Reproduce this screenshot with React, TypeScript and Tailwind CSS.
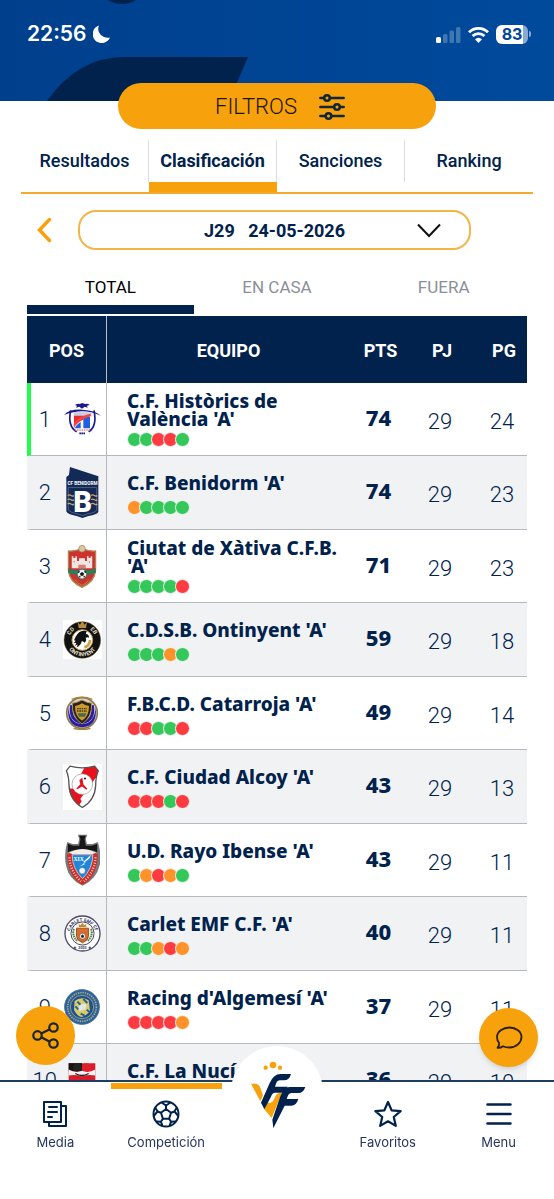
import { useState } from "react";
import type { ReactNode } from "react";
import clsx from "clsx";

type Result = "W" | "D" | "L";

type Team = {
  name: string;
  pts: number;
  played: number;
  won: number;
  form: string;
  crest: ReactNode;
};

const dotColors: Record<Result, string> = {
  W: "bg-[#34c759]",
  D: "bg-[#ff922b]",
  L: "bg-[#ff3b42]",
};

const HistoricsCrest = () => (
  <svg viewBox="0 0 111 96" className="w-[37px] h-8" aria-hidden="true">
    <path d="M33 6q8-6 14-3l8-3 8 3q8-3 14 3l-8 2 2 6-9-3-8 6-8-6-10 3 3-6z" fill="#1a1a8c" />
    <path d="M20 22Q10 70 38 86M90 22Q100 70 74 86" fill="none" stroke="#1a1a8c" strokeWidth="5" />
    <path d="M0 36Q16 18 55 20T111 38Q80 25 55 25T0 36z" fill="#1a1a8c" />
    <path d="M29 28h54v12q-30 0-54 18z" fill="#c9cde4" />
    <path d="M30 38h28v12q-14 4-28 22z" fill="#ee2b2b" />
    <path d="M58 44q12-6 20-2v34H58z" fill="#1f5fe0" />
    <path d="M30 76q10-24 50-36v-8Q44 38 29 62z" fill="#f04444" />
    <path d="M50 56v20H32q6-12 18-20z" fill="#1f5fe0" />
    <path d="M32 81h46" stroke="#e77" strokeWidth="5" strokeDasharray="4 3" />
    <path d="M46 91h18" stroke="#1a1a8c" strokeWidth="5" strokeDasharray="5 1" />
  </svg>
);

const BenidormCrest = () => (
  <svg viewBox="0 0 100 154" className="w-[33px] h-[51px]" aria-hidden="true">
    <path d="M12 0 98 28v108q-4 8-30 12l-18 6-18-6Q4 144 1 134V30l8-6z" fill="#132a56" />
    <path d="M7 62v68q6 8 28 12l15 5 15-5q24-4 28-12V62z" fill="none" stroke="#8b93a8" strokeWidth="1.5" />
    <text x="50" y="53" textAnchor="middle" fill="#fff" fontSize="14" fontWeight="700" fontFamily="Roboto">CF BENIDORM</text>
    <text x="50" y="136" textAnchor="middle" fill="#fff" fontSize="88" fontWeight="900" fontFamily="Roboto">B</text>
    <path d="M5 86q5-4 10 0t9 0M5 99q5-4 10 0t9 0M5 112q5-4 10 0t9 0M76 86q5-4 10 0t9 0M76 99q5-4 10 0t9 0M76 112q5-4 10 0t9 0" fill="none" stroke="#c9a56a" strokeWidth="4" />
  </svg>
);

const XativaCrest = () => (
  <svg viewBox="0 0 90 130" className="w-[30px] h-[43px]" aria-hidden="true">
    <path d="M4 18Q24 20 45 10 66 20 86 18v58q-2 34-41 52Q6 110 4 76z" fill="#cf3030" stroke="#a98a52" strokeWidth="4" />
    <circle cx="45" cy="11" r="10" fill="#d8c8a0" stroke="#9a8555" strokeWidth="2" />
    <path d="M14 34h5v5h6v-5h5v14h6V40h18v8h6V34h5v5h6v-5h5v36H14z" fill="#efe6e0" />
    <path d="M34 60h22v10H34zM20 48h3v6h-3zM66 48h3v6h-3z" fill="#d77" />
    <path d="M3 70q20 12 42 2 22 10 42-2v14q-22 10-42 4-22 6-42-4z" fill="#2f7d58" />
    <circle cx="45" cy="88" r="16" fill="#2f7d58" />
    <circle cx="45" cy="88" r="13" fill="#eee" />
    <path d="m45 82 6 4-2 7h-8l-2-7z" fill="#111" />
    <path d="m34 84 3-5M56 84l-3-5M37 97l3-2M53 97l-3-2" stroke="#111" strokeWidth="4" />
    <path d="M24 104q8 14 21 18 13-4 21-18" fill="none" stroke="#b3872f" strokeWidth="3" />
  </svg>
);

const OntinyentCrest = () => (
  <svg viewBox="0 0 117 117" className="w-[39px] h-[39px] bg-white" aria-hidden="true">
    <circle cx="58" cy="60" r="55" fill="#111" stroke="#7a6a45" strokeWidth="1.5" />
    <circle cx="58" cy="60" r="31" fill="#fff" stroke="#c9a24b" strokeWidth="3" />
    <path d="M44 6 51 14l7-12 7 12 7-8-3 18H47z" fill="#b98b3d" />
    <path d="M38 50q12-24 34-16-4 3-3 8 9 1 9 11-6-3-10 1 4 8-3 14-4-6-9-4-2 12-15 18l3-9-8 5 4-10-8 2 6-8-5-1z" fill="#111" />
    <path d="M64 82q16-4 17-22" fill="none" stroke="#c9a24b" strokeWidth="8" />
    <defs>
      <path id="ontTop" d="M19 60a39 39 0 0 1 78 0" />
      <path id="ontBottom" d="M9 60a49 49 0 0 0 98 0" />
    </defs>
    <g fill="#e8e2d0" fontFamily="Roboto" fontWeight="700" fontSize="17">
      <text><textPath href="#ontTop" startOffset="12%">CD</textPath></text>
      <text><textPath href="#ontTop" startOffset="70%">EB</textPath></text>
      <text><textPath href="#ontBottom" startOffset="50%" textAnchor="middle">ONTINYENT</textPath></text>
    </g>
  </svg>
);

const CatarrojaCrest = () => (
  <svg viewBox="0 0 102 102" className="w-[34px] h-[34px]" aria-hidden="true">
    <circle cx="51" cy="51" r="46" fill="#d8d2d8" stroke="#8c7a55" strokeWidth="5" />
    <path d="M10 34Q4 92 51 94 98 92 92 34 88 84 51 84 14 84 10 34z" fill="#2a1e9a" />
    <path d="M20 28Q12 74 51 80 90 74 82 28" fill="none" stroke="#2a1e9a" strokeWidth="9" />
    <path d="M22 22q15-2 29-10 14 8 29 10 2 42-29 62Q20 64 22 22z" fill="#2a2119" stroke="#b3913d" strokeWidth="3" />
    <path d="M30 30q12-2 21-8 9 6 21 8 0 32-21 44-21-12-21-44z" fill="#c99c2e" />
    <path d="M36 38h30M36 45h30" stroke="#4a3717" strokeWidth="4" strokeDasharray="5 2" />
    <path d="M38 52h26l-4 10H42z" fill="#446a55" />
    <path d="M20 10q31-13 62 0M26 97q25 7 50 0" fill="none" stroke="#a9852f" strokeWidth="4" />
  </svg>
);

const AlcoyCrest = () => (
  <svg viewBox="0 0 117 137" className="w-[39px] h-[46px] bg-white" aria-hidden="true">
    <defs>
      <clipPath id="alcoy">
        <path d="M10 20 21 6q37 10 74 0l11 14q-8 18-8 44-2 44-40 66-38-22-40-66 0-26-8-44z" />
      </clipPath>
    </defs>
    <g clipPath="url(#alcoy)">
      <path fill="#fff" d="M0 0h117v137H0z" />
      <path d="M70 0h50v24L96 44 40 120 14 104V74h16z" fill="#e8121d" />
      <path d="M14 74h20l24 40-10 16z" fill="#e8121d" />
      <path d="m50 120 24-34 30-46v97H50z" fill="#fff" />
    </g>
    <circle cx="58" cy="60" r="31" fill="#fff" stroke="#777" strokeWidth="1.5" />
    <path d="m58 40 3 20 12 14-3 3-13-10-14 8-3-2 12-13-3-12z" fill="#e8121d" />
    <circle cx="66" cy="43" r="3" fill="#111" />
    <path d="M10 20 21 6q37 10 74 0l11 14q-8 18-8 44-2 44-40 66-38-22-40-66 0-26-8-44z" fill="none" stroke="#555" strokeWidth="4" />
  </svg>
);

const RayoCrest = () => (
  <svg viewBox="0 0 104 156" className="w-[35px] h-[52px]" aria-hidden="true">
    <path d="M38 2h28l-4 12 3 16h17l16-6q12 38 6 68-10 44-52 63Q10 136 2 92-4 62 6 24l16 6h17l3-16z" fill="#77797c" />
    <path d="M42 5h20l-4 10 4 20h18l16-6v26q-14-8-22-6-22-8-44 0-8-2-22 6V29l16 6h18l4-20z" fill="#171717" />
    <path d="M6 62q46-30 92 0-2 66-46 90Q8 128 6 62z" fill="#d12c25" />
    <path d="M21 62h62q0 42-31 72Q21 104 21 62z" fill="#1f86d8" stroke="#eee" strokeWidth="2" />
    <path d="M10 56q42-22 84 0l-12 4H22z" fill="#f2efe9" />
    <path d="m78 62-24 22h8L42 98l18-8-6-2 18-14z" fill="#fff" />
    <circle cx="51" cy="110" r="9" fill="#f4f4f4" stroke="#777" />
    <text x="25" y="80" fill="#fff" fontSize="17" fontWeight="700" fontFamily="Liberation Serif">XIX</text>
    <path d="M13 70q2 42 34 72M91 70q-2 42-34 72" fill="none" stroke="#f3d9d5" strokeWidth="7" strokeDasharray="3 5" />
  </svg>
);

const CarletCrest = () => (
  <svg viewBox="0 0 112 112" className="w-[37px] h-[37px]" aria-hidden="true">
    <circle cx="56" cy="56" r="53" fill="#fff" stroke="#4a4a6a" strokeWidth="4" />
    <circle cx="56" cy="56" r="35" fill="#f6f4ef" stroke="#4a4a6a" strokeWidth="3" />
    <path d="M45 36v-9l5 4 6-7 6 7 5-4v9z" fill="#c68a2c" />
    <path d="M38 40h36v24q0 12-18 20-18-8-18-20z" fill="#e0692c" stroke="#8a5a22" strokeWidth="3" />
    <circle cx="56" cy="64" r="9" fill="#fff" stroke="#333" strokeWidth="1.5" />
    <path d="m56 59 5 4-2 6h-6l-2-6z" fill="#222" />
    <path d="M30 42q-7 20 10 36M82 42q7 20-10 36" fill="none" stroke="#4f8a4a" strokeWidth="6" strokeDasharray="5 2" />
    <defs>
      <path id="carTop" d="M16 60a40 40 0 0 1 80 0" />
    </defs>
    <text fill="#34345c" fontFamily="Roboto" fontWeight="700" fontSize="14">
      <textPath href="#carTop" startOffset="50%" textAnchor="middle">CARLET EMF CF</textPath>
    </text>
    <text x="56" y="103" textAnchor="middle" fill="#34345c" fontFamily="Roboto" fontWeight="700" fontSize="11">★ 2003 ★</text>
  </svg>
);

const RacingCrest = () => (
  <svg viewBox="0 0 108 108" className="w-9 h-9" aria-hidden="true">
    <circle cx="54" cy="54" r="52" fill="#2f5f9a" stroke="#3d7096" strokeWidth="3" />
    <circle cx="54" cy="54" r="43" fill="none" stroke="#9fb489" strokeWidth="5" strokeDasharray="4 3" />
    <circle cx="54" cy="54" r="35" fill="#1f4f96" stroke="#c9c36a" strokeWidth="2" />
    <path d="M32 36q20-16 42-2l4 30q-8 16-26 20-16-6-22-22z" fill="#d6cc62" />
    <path d="m40 38 10 10M34 52l10 10M58 30l12 12M50 74l12 6M68 62l10 8" stroke="#2f5f9a" strokeWidth="6" />
    <path d="M44 52q12-14 24-4l-4 14-20 4z" fill="#dfe6e6" />
  </svg>
);

const NuciaCrest = () => (
  <svg viewBox="0 0 84 110" className="w-7 h-[37px]" aria-hidden="true">
    <path d="M2 3h80v62Q78 92 42 108 6 92 2 65z" fill="#d91c2b" />
    <path d="M2 3h40v24H2z" fill="#141414" />
    <circle cx="28" cy="16" r="13" fill="#222" />
    <circle cx="56" cy="16" r="13" fill="#e11d2b" />
    <path d="M2 22q20 12 40 4 20 8 40-4v18q-20-4-40 2-20-6-40-2z" fill="#f6f1f1" />
    <path d="M22 34q20 12 40 0" fill="none" stroke="#222" strokeWidth="4" />
  </svg>
);

const teams: Team[] = [
  { name: "C.F. Històrics de València 'A'", pts: 74, played: 29, won: 24, form: "WWLLW", crest: <HistoricsCrest /> },
  { name: "C.F. Benidorm 'A'", pts: 74, played: 29, won: 23, form: "DWWWW", crest: <BenidormCrest /> },
  { name: "Ciutat de Xàtiva C.F.B. 'A'", pts: 71, played: 29, won: 23, form: "WWWWL", crest: <XativaCrest /> },
  { name: "C.D.S.B. Ontinyent 'A'", pts: 59, played: 29, won: 18, form: "WWWDW", crest: <OntinyentCrest /> },
  { name: "F.B.C.D. Catarroja 'A'", pts: 49, played: 29, won: 14, form: "LLWWL", crest: <CatarrojaCrest /> },
  { name: "C.F. Ciudad Alcoy 'A'", pts: 43, played: 29, won: 13, form: "LLLWL", crest: <AlcoyCrest /> },
  { name: "U.D. Rayo Ibense 'A'", pts: 43, played: 29, won: 11, form: "WDLDW", crest: <RayoCrest /> },
  { name: "Carlet EMF C.F. 'A'", pts: 40, played: 29, won: 11, form: "WWDLD", crest: <CarletCrest /> },
  { name: "Racing d'Algemesí 'A'", pts: 37, played: 29, won: 11, form: "LLLLD", crest: <RacingCrest /> },
  { name: "C.F. La Nucía 'A'", pts: 36, played: 29, won: 10, form: "WLWDL", crest: <NuciaCrest /> },
];

const sections = ["Resultados", "Clasificación", "Sanciones", "Ranking"];
const venues = ["TOTAL", "EN CASA", "FUERA"];

const StatusBar = () => (
  <div className="relative flex items-center justify-between pl-[27px] pr-[23px] pt-5 text-white font-['Inter',sans-serif]">
    <div className="flex items-center gap-1.5">
      <span className="text-[21px] leading-7 font-semibold">22:56</span>
      <svg viewBox="0 0 17 18" className="w-[17px] h-[18px]" aria-hidden="true">
        <path d="M6 .5A9 9 0 1 0 17 12.500 9.500 9.500 0 0 1 11 12 8.500 8.500 0 0 1 6 .5z" fill="#fff" />
      </svg>
    </div>
    <div className="flex items-center gap-[7px]">
      <svg viewBox="0 0 25 17" className="w-[25px] h-[17px]" aria-hidden="true">
        <rect x="0" y="11" width="5" height="6" rx="1.500" fill="#fff" />
        <g fill="#fff" opacity=".25">
          <rect x="7" y="8" width="4.500" height="9" rx="1.500" />
          <rect x="13.500" y="4.500" width="4.500" height="12.500" rx="1.500" />
          <rect x="20" y="1" width="4.500" height="16" rx="1.500" />
        </g>
      </svg>
      <svg viewBox="0 0 21 17" className="w-[21px] h-[17px]" fill="none" stroke="#fff" strokeWidth="2.800" aria-hidden="true">
        <path d="M1 6.200a13.500 13.500 0 0 1 19 0M4.600 10a8.500 8.500 0 0 1 11.800 0" />
        <path d="M10.500 17 7 13.300a5.200 5.200 0 0 1 7 0z" fill="#fff" stroke="none" />
      </svg>
      <div className="flex items-center gap-px">
        <span className="w-8 h-[19px] rounded-md bg-linear-to-r from-white from-84% to-[#8aa9d0] to-84% text-[#00459a] text-base leading-[19px] font-bold text-center">
          83
        </span>
        <span className="w-0.5 h-1.5 rounded-r bg-[#8aa9d0]" />
      </div>
    </div>
  </div>
);

const SlidersIcon = () => (
  <svg viewBox="0 0 26 28" className="w-[26px] h-7" fill="none" stroke="#12263a" strokeWidth="2.500" strokeLinecap="round" aria-hidden="true">
    <path d="M1.300 5H5M11 5h13.700M1.300 14H15M21 14h3.700M1.300 23H6.500M12.500 23h12.200" />
    <circle cx="8" cy="5" r="2.800" />
    <circle cx="18" cy="14" r="2.800" />
    <circle cx="9.500" cy="23" r="2.800" />
  </svg>
);

const FormDots = ({ form }: { form: string }) => (
  <div className="flex">
    {form.split("").map((result, i) => (
      <span
        key={i}
        className={clsx(
          "size-[15px] -mr-[3px] rounded-full border border-[#f3f8f3]",
          dotColors[result as Result]
        )}
      />
    ))}
  </div>
);

const StandingsTable = () => (
  <table className="w-full table-fixed border-separate border-spacing-0 text-[#00224d]">
    <colgroup>
      <col className="w-20" />
      <col />
      <col className="w-[61px]" />
      <col className="w-[62px]" />
      <col className="w-[54px]" />
    </colgroup>
    <thead>
      <tr className="h-[67px] bg-[#00224d] text-white text-lg">
        <th className="pt-0.5 font-bold border-r border-[#b9bdc5]">POS</th>
        <th className="pt-0.5 font-bold">EQUIPO</th>
        <th className="pt-0.5 font-bold">PTS</th>
        <th className="pt-0.5 font-bold">PJ</th>
        <th className="pt-0.5 font-bold pl-2">PG</th>
      </tr>
    </thead>
    <tbody>
      {teams.map((team, i) => (
        <tr key={team.name} className="h-[74px] odd:h-[73px] bg-white even:bg-[#f0f2f4]">
          <td
            className={clsx(
              "p-0 border-b border-r border-b-[#b5b8bd] border-r-[#b5b8bd] border-l-4",
              i === 0 ? "border-l-[#1dff4a]" : "border-l-transparent"
            )}
          >
            <div className="flex items-center">
              <span className="w-7 text-center text-[22px] font-light">{i + 1}</span>
              <span className="w-12 flex justify-center">{team.crest}</span>
            </div>
          </td>
          <td className="p-0 pl-5 border-b border-[#b5b8bd]">
            <div className="min-h-[26px] flex items-center font-['Noto_Sans',sans-serif] font-extrabold text-[19px] leading-[18px] mb-1">
              {team.name}
            </div>
            <FormDots form={team.form} />
          </td>
          <td className="p-0 pr-1 pb-1 border-b border-[#b5b8bd] text-center text-[22px] font-extrabold font-['Noto_Sans',sans-serif]">
            {team.pts}
          </td>
          <td className="p-0 pr-1 pt-1 border-b border-[#b5b8bd] text-center text-[22px] font-light">{team.played}</td>
          <td className="p-0 pl-1 pt-1 border-b border-[#b5b8bd] text-center text-[22px] font-light">{team.won}</td>
        </tr>
      ))}
    </tbody>
  </table>
);

const NavItem = ({ label, active, children }: { label: string; active?: boolean; children: ReactNode }) => (
  <a href="#" className="flex-1 flex flex-col items-center text-[13px] leading-4 text-[#26355f]">
    <span className={clsx("w-full h-1.5 mt-px mb-[11px]", active && "bg-[#f7a20c]")} />
    <span className="h-7 mb-1.5 flex items-center justify-center">{children}</span>
    {label}
  </a>
);

const BottomNav = () => (
  <nav className="relative shrink-0 h-[119px] flex bg-white border-t-2 border-[#1f3d60] font-['Inter',sans-serif]">
    <NavItem label="Media">
      <svg viewBox="0 0 26 28" className="w-[26px] h-7" fill="none" stroke="#00224d" strokeWidth="2" strokeLinejoin="round" strokeLinecap="round" aria-hidden="true">
        <path d="M2 2h17v20H2zM19 6h5v20H7v-4" />
        <path d="M7 7h8M6 12h9M6 17h4" />
      </svg>
    </NavItem>
    <NavItem label="Competición" active>
      <svg viewBox="0 0 28 28" className="size-7" fill="none" stroke="#00224d" strokeWidth="2" strokeLinejoin="round" aria-hidden="true">
        <circle cx="14" cy="14" r="12.500" />
        <path d="m14 9 5 3.700-1.900 6h-6.200L9 12.700z" />
        <path d="M14 9V5.500M19 12.700l3.500-1.200M17.100 18.700l2 3M10.900 18.700l-2 3M9 12.700l-3.500-1.200" />
        <path d="m9.500 2.500 4.500 3 4.500-3M24.800 7.500l-2.300 4 3.800 4.500M24 21.500l-4.900.2-1.600 4.500M4 21.500l4.900.2 1.600 4.500M3.200 7.500l2.300 4L1.700 16" />
      </svg>
    </NavItem>
    <a href="#" aria-label="Inicio" className="flex-1 flex justify-center">
      <span className="size-[92px] -mt-9 rounded-full bg-white flex justify-center pt-2.5">
        <svg viewBox="0 0 192 228" className="w-16 h-[76px]" aria-hidden="true">
          <g fill="#f7a20c">
            <circle cx="62" cy="35" r="6.500" />
            <circle cx="84" cy="27" r="10" />
            <circle cx="105" cy="35" r="6.500" />
            <path d="M18 83h14q11 1 15 15l7 20-8 18z" />
            <path d="m58 160 9-22q13 8 20-8l5-11q3-9 19-9L80 186z" />
          </g>
          <g fill="#00224d">
            <path d="M138 54q-5 19-21 19h-12q-8 0-12 10l-3 9h38q-6 18-20 18H90q-8 0-12 12l-20 38-10-20 25-57q12-29 34-29z" />
            <path d="M181 93q-6 18-21 18h-20q-8 0-12 10l-3 8h35q-6 20-21 20h-20l-34 68-3-26 24-70q10-28 28-28z" />
          </g>
        </svg>
      </span>
    </a>
    <NavItem label="Favoritos">
      <svg viewBox="0 0 28 28" className="size-7" fill="none" stroke="#00224d" strokeWidth="2.200" strokeLinejoin="round" aria-hidden="true">
        <path d="m14 2 3.600 8.300 9 .8-6.800 5.900 2 8.900L14 21.300l-7.800 4.600 2-8.900-6.800-5.900 9-.8z" />
      </svg>
    </NavItem>
    <NavItem label="Menu">
      <svg viewBox="0 0 26 24" className="w-[26px] h-6" stroke="#00224d" strokeWidth="2.500" strokeLinecap="round" aria-hidden="true">
        <path d="M1.500 2.500h23M1.500 12h23M1.500 21.500h23" />
      </svg>
    </NavItem>
  </nav>
);

const App = () => {
  const [section, setSection] = useState("Clasificación");
  const [venue, setVenue] = useState("TOTAL");

  return (
    <div className="relative h-screen flex flex-col overflow-hidden bg-white font-['Roboto',sans-serif]">
      <header className="relative shrink-0 h-[101px] bg-linear-to-r from-[#003f8c] to-[#004a9c]">
        <svg viewBox="0 0 554 101" className="absolute left-0 top-0 w-[554px] h-[101px]" aria-hidden="true">
          <path d="M108 0q6 4 14 4t14-4z" fill="#00224d" />
          <path d="M47 101Q78 57 124 57h124l-19 44z" fill="#00224d" />
        </svg>
        <StatusBar />
      </header>

      <main className="relative flex-1 min-h-0 flex flex-col">
        <button className="relative shrink-0 -mt-[18px] mx-auto w-[318px] h-[46px] rounded-full bg-[#f7a20c] flex items-center justify-center gap-[22px] text-[22px] leading-7 font-light text-[#1d1405] pl-1.5 pt-0.5">
          FILTROS
          <SlidersIcon />
        </button>

        <div className="shrink-0 mx-[21px] mt-[11px] flex border-b-2 border-[#f2ab2e] text-lg text-[#00224d]">
          {sections.map((item) => (
            <button key={item} onClick={() => setSection(item)} className="flex-1 h-[52px] flex flex-col justify-between">
              <span
                className={clsx(
                  "w-full h-[42px] flex items-center justify-center",
                  item !== "Ranking" && "border-r border-[#dcdde0]",
                  item === section ? "font-bold" : "font-medium"
                )}
              >
                {item}
              </span>
              {item === section && <span className="w-full h-2.5 bg-[#f7a20c]" />}
            </button>
          ))}
        </div>

        <div className="shrink-0 mt-4 pl-[37px] pr-[83px] flex items-center">
          <button aria-label="Jornada anterior" className="w-[41px]">
            <svg viewBox="0 0 15 26" className="w-[15px] h-[26px]" fill="none" stroke="#f7a20c" strokeWidth="3.500" strokeLinecap="round" aria-hidden="true">
              <path d="M12.500 2.500 2.500 13l10 10.500" />
            </svg>
          </button>
          <div className="relative flex-1">
            <select
              aria-label="Jornada"
              className="appearance-none w-full h-10 pt-0.5 rounded-[18px] border-2 border-[#f4b548] bg-white text-lg font-bold text-[#00224d] text-center [text-align-last:center]"
            >
              <option>J29{"\u00a0\u00a0\u00a0"}24-05-2026</option>
            </select>
            <svg viewBox="0 0 24 15" className="absolute right-[30px] top-[13px] w-6 h-[15px] pointer-events-none" fill="none" stroke="#111" strokeWidth="2" aria-hidden="true">
              <path d="m1 1.500 11 11.500L23 1.500" />
            </svg>
          </div>
        </div>

        <div className="shrink-0 mx-[27px] mt-5 mb-0.5 flex text-[17px]">
          {venues.map((item) => (
            <button
              key={item}
              onClick={() => setVenue(item)}
              className={clsx("flex-1 h-11 flex flex-col", item === venue ? "text-black" : "text-[#8b8f98]")}
            >
              <span className="w-full h-[35px] flex items-center justify-center">{item}</span>
              {item === venue && <span className="w-full h-[9px] bg-[#00224d]" />}
            </button>
          ))}
        </div>

        <div className="flex-1 min-h-0 mx-[27px] overflow-y-auto [scrollbar-width:none]">
          <StandingsTable />
        </div>

        <button aria-label="Compartir" className="absolute left-4 bottom-[15px] size-[59px] rounded-full bg-[#f7a20c] flex items-center justify-center">
          <svg viewBox="0 0 27 27" className="size-[27px]" fill="none" stroke="#1c2430" strokeWidth="2.200" aria-hidden="true">
            <path d="m9.300 11.600 8.500-4.300M9.300 15.200l8.500 4.600" />
            <circle cx="5.500" cy="13.400" r="4.200" />
            <circle cx="21.500" cy="5.500" r="4.200" />
            <circle cx="21.500" cy="21.500" r="4.200" />
          </svg>
        </button>
        <button aria-label="Chat" className="absolute right-4 bottom-[13px] size-[59px] rounded-full bg-[#f7a20c] shadow-md flex items-center justify-center">
          <svg viewBox="0 0 28 24" className="w-7 h-6" fill="none" stroke="#2a2008" strokeWidth="1.800" strokeLinejoin="round" aria-hidden="true">
            <path d="M14.500 1.500C21 1.500 26.500 5.500 26.500 11S21 21.500 14.500 21.500c-2.500 0-4.600-.4-6.500-1.300-1.500 1.200-3.500 1.800-5.500 1.600 1.300-1.400 1.900-3 1.600-4.800C2.500 15.200 2 13.200 2 11c0-5.500 6-9.500 12.500-9.500z" />
          </svg>
        </button>
      </main>

      <BottomNav />
    </div>
  );
};

export default App;
